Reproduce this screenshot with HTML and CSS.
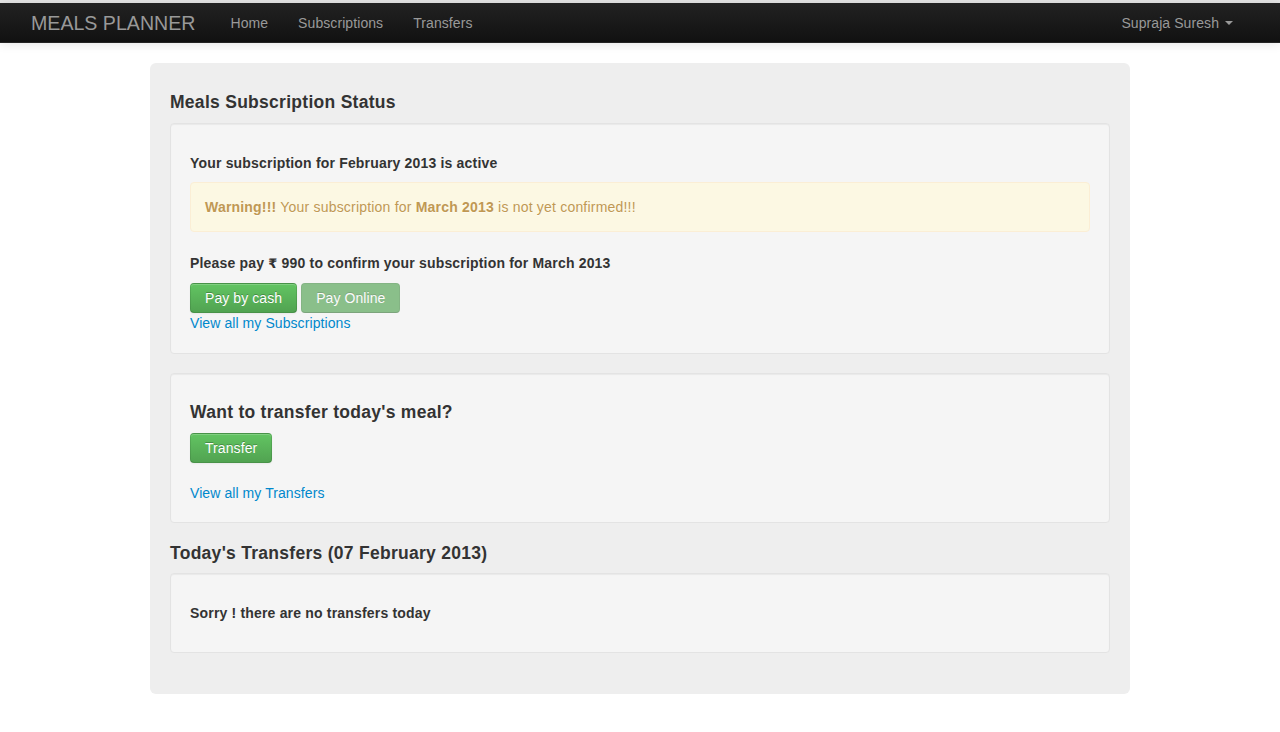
FILE: index.html
```html
<!DOCTYPE html>
<html>
<head>
<meta charset="utf-8">
<title>Meals Planner</title>
<link rel="stylesheet" href="styles.css">
</head>
<body>
<div class="topline"></div>
<nav class="navbar">
  <a class="brand" href="#">MEALS PLANNER</a>
  <ul class="nav">
    <li><a href="#">Home</a></li>
    <li><a href="#">Subscriptions</a></li>
    <li><a href="#">Transfers</a></li>
  </ul>
  <ul class="nav nav-right">
    <li><a href="#">Supraja Suresh <span class="caret"></span></a></li>
  </ul>
</nav>
<main class="container">
  <section class="hero">
    <h4 class="title-first">Meals Subscription Status</h4>
    <div class="well well-status">
      <h5>Your subscription for February 2013 is active</h5>
      <div class="alert"><strong>Warning!!!</strong> Your subscription for <strong>March 2013</strong> is not yet confirmed!!!</div>
      <h5>Please pay <span class="rupee">₹</span> 990 to confirm your subscription for March 2013</h5>
      <div class="btns">
        <a class="btn btn-success" href="#">Pay by cash</a>
        <a class="btn btn-success disabled" href="#">Pay Online</a>
      </div>
      <a class="link" href="#">View all my Subscriptions</a>
    </div>
    <div class="well well-transfer">
      <h4 class="well-title">Want to transfer today's meal?</h4>
      <div class="btns">
        <a class="btn btn-success" href="#">Transfer</a>
      </div>
      <a class="link spaced" href="#">View all my Transfers</a>
    </div>
    <h4 class="title-last">Today's Transfers (07 February 2013)</h4>
    <div class="well well-today">
      <h5>Sorry ! there are no transfers today</h5>
    </div>
  </section>
</main>
</body>
</html>
```

FILE: styles.css
```css
* { box-sizing: border-box; }
html, body { margin: 0; padding: 0; }
body {
  font-family: "Liberation Sans", Arial, sans-serif;
  font-size: 14px;
  line-height: 20px;
  color: #333;
  background: #fff;
}
a { text-decoration: none; }

.topline { height: 3px; background: #e4e4e4; }

.navbar {
  display: flex;
  align-items: center;
  height: 40px;
  padding: 0 32px 0 20px;
  background: linear-gradient(to bottom, #222 0%, #111 100%);
  border-bottom: 1px solid #252525;
  box-shadow: 0 1px 10px rgba(0,0,0,0.1);
}
.brand {
  font-size: 19.6px;
  line-height: 20px;
  font-weight: 200;
  color: #999;
  padding: 10px 20px 10px 11px;
}
.nav {
  display: flex;
  list-style: none;
  margin: 0;
  padding: 0;
}
.nav a {
  display: block;
  padding: 10px 15px;
  color: #999;
  font-size: 14px;
  line-height: 20px;
  letter-spacing: 0.08px;
}
.nav-right { margin-left: auto; }
.caret {
  display: inline-block;
  width: 0; height: 0;
  vertical-align: top;
  margin-top: 8px;
  margin-left: 2px;
  border-top: 4px solid #999;
  border-left: 4px solid transparent;
  border-right: 4px solid transparent;
}

.container {
  width: 980px;
  margin: 20px auto 0;
}
.hero {
  background: #eee;
  border-radius: 6px;
  padding: 20px 20px 22px;
}
.hero::after { content: ""; display: table; }
h4 {
  font-size: 17.5px;
  line-height: 20px;
  font-weight: bold;
  letter-spacing: 0.28px;
  margin: 10px 0 11px;
}
.title-first { margin-top: 9px; }
.title-last { margin-bottom: 10px; }
h5 {
  font-size: 14px;
  line-height: 20px;
  font-weight: bold;
  letter-spacing: 0.18px;
  margin: 10px 0 9px;
}
.rupee { font-family: "DejaVu Sans", sans-serif; font-size: 13px; }
.well {
  background: #f5f5f5;
  border: 1px solid #e3e3e3;
  border-radius: 4px;
  padding: 19px 19px 20px;
  margin-bottom: 19px;
  box-shadow: inset 0 1px 1px rgba(0,0,0,0.05);
}
.well-transfer { padding-bottom: 19px; margin-bottom: 20px; }
.well-title { margin: 9px 0 11px; }
.alert {
  background: #fcf8e3;
  border: 1px solid #fbeed5;
  border-radius: 4px;
  color: #c09853;
  padding: 14px 35px 14px 14px;
  margin-bottom: 21px;
  letter-spacing: 0.2px;
  text-shadow: 0 1px 0 rgba(255,255,255,0.5);
}
.btns { display: flex; gap: 4px; }
.btn {
  display: inline-block;
  padding: 4px 14px;
  font-size: 14px;
  line-height: 20px;
  letter-spacing: 0.08px;
  border-radius: 4px;
  color: #fff;
  text-shadow: 0 -1px 0 rgba(0,0,0,0.25);
  border: 1px solid rgba(0,0,0,0.1);
  border-bottom-color: rgba(0,0,0,0.25);
  box-shadow: inset 0 1px 0 rgba(255,255,255,0.2), 0 1px 2px rgba(0,0,0,0.05);
}
.btn-success {
  background-color: #5bb75b;
  background-image: linear-gradient(to bottom, #62c462, #51a351);
}
.btn-success.disabled {
  background-image: none;
  background-color: #51a351;
  opacity: 0.65;
  box-shadow: none;
}
.link {
  display: block;
  color: #0088cc;
  line-height: 20px;
  letter-spacing: 0.08px;
}
.link.spaced { margin-top: 20px; }
```
